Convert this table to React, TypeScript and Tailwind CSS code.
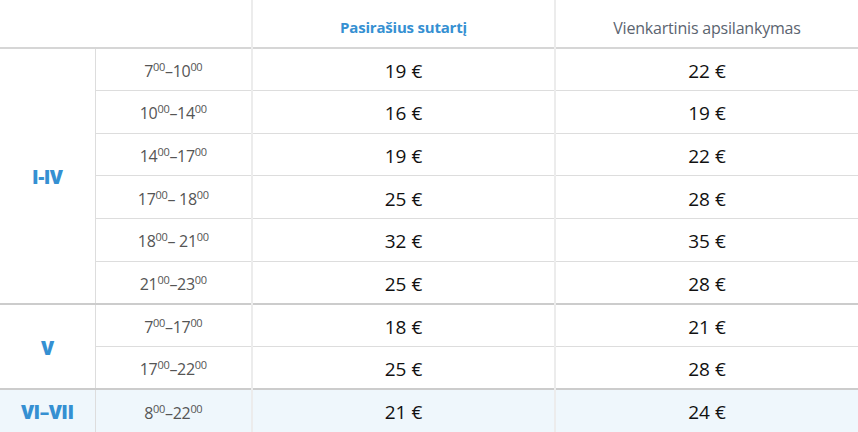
import React from 'react';

type Row = { from: string; to: string; dash?: string; contract: number; single: number };
type Group = { label: string; rows: Row[]; highlight?: boolean };

const groups: Group[] = [
  {
    label: 'I-IV',
    rows: [
      { from: '7', to: '10', contract: 19, single: 22 },
      { from: '10', to: '14', contract: 16, single: 19 },
      { from: '14', to: '17', contract: 19, single: 22 },
      { from: '17', to: '18', dash: '– ', contract: 25, single: 28 },
      { from: '18', to: '21', dash: '– ', contract: 32, single: 35 },
      { from: '21', to: '23', contract: 25, single: 28 },
    ],
  },
  {
    label: 'V',
    rows: [
      { from: '7', to: '17', contract: 18, single: 21 },
      { from: '17', to: '22', contract: 25, single: 28 },
    ],
  },
  {
    label: 'VI–VII',
    highlight: true,
    rows: [{ from: '8', to: '22', contract: 21, single: 24 }],
  },
];

function Time({ from, to, dash = '–' }: { from: string; to: string; dash?: string }) {
  return (
    <span className="text-[16px] text-[#555] tracking-[-0.3px]">
      {from}
      <sup className="text-[11px] top-[-0.55em]">00</sup>
      {dash}
      {to}
      <sup className="text-[11px] top-[-0.55em]">00</sup>
    </span>
  );
}

export default function App() {
  return (
    <div className="w-[858px] h-[432px] overflow-hidden bg-white font-['Open_Sans',sans-serif]">
      <table className="w-[858px] border-collapse table-fixed">
        <colgroup>
          <col className="w-[95px]" />
          <col className="w-[157px]" />
          <col className="w-[303px]" />
          <col className="w-[303px]" />
        </colgroup>
        <thead>
          <tr className="h-[48px] border-b-2 border-[#d6d6d6]">
            <th colSpan={2} className="border-r-2 border-[#ececec]"></th>
            <th className="border-r-2 border-[#ececec] pt-[8px] text-[15px] font-bold text-[#3590d2] tracking-[-0.2px]">
              Pasirašius sutartį
            </th>
            <th className="pt-[8px] text-[16px] font-normal text-[#5b6470] tracking-[-0.2px]">
              Vienkartinis apsilankymas
            </th>
          </tr>
        </thead>
        <tbody>
          {groups.map((g, gi) =>
            g.rows.map((r, ri) => (
              <tr
                key={`${gi}-${ri}`}
                className={`h-[42.67px] ${g.highlight ? 'bg-[#eff7fc]' : ''} ${
                  ri === 0 && gi > 0 ? 'border-t-2 border-[#cccccc]' : ri > 0 ? 'border-t border-[#dddddd]' : ''
                }`}
              >
                {ri === 0 && (
                  <td
                    rowSpan={g.rows.length}
                    className="border-r border-[#dddddd] pt-[3px] text-center align-middle text-[19px] font-extrabold text-[#3590d2] tracking-[-0.5px]"
                  >
                    {g.label}
                  </td>
                )}
                <td className="border-r-2 border-[#ececec] pt-[3px] text-center align-middle">
                  <Time from={r.from} to={r.to} dash={r.dash} />
                </td>
                <td className="border-r-2 border-[#ececec] pt-[3px] text-center align-middle text-[19px] text-[#111]">
                  {r.contract} €
                </td>
                <td className="pt-[3px] text-center align-middle text-[19px] text-[#111]">{r.single} €</td>
              </tr>
            ))
          )}
        </tbody>
      </table>
    </div>
  );
}
